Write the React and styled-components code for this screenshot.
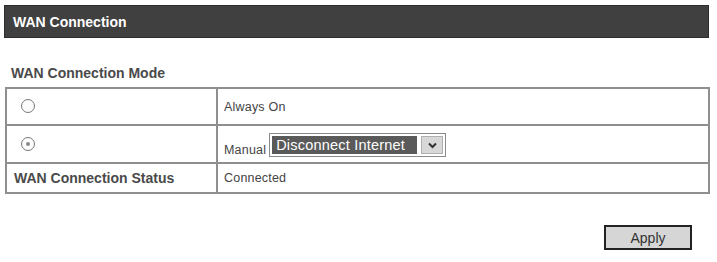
import styled, { createGlobalStyle } from "styled-components";

const GlobalStyle = createGlobalStyle`
  body {
    margin: 0;
    background: #fff;
    font-family: "Liberation Sans", Arial, sans-serif;
  }
`;

const Page = styled.div`
  width: 717px;
  height: 262px;
  padding: 5px 8px 0 4px;
  box-sizing: border-box;
`;

const TitleBar = styled.div`
  height: 33px;
  background: #404040;
  border: 1px solid #2c2c2c;
  box-sizing: border-box;
  display: flex;
  align-items: center;
  padding: 1px 0 0 8px;
  color: #fff;
  font-weight: bold;
  font-size: 14px;
`;

const SectionTitle = styled.div`
  margin: 27px 0 0 7px;
  height: 18px;
  color: #4a4a4a;
  font-weight: bold;
  font-size: 14px;
`;

const Table = styled.table`
  margin: 4px 0 0 1px;
  width: 705px;
  table-layout: fixed;
  border-collapse: collapse;
  border: 2px solid #8f8f8f;
  color: #444;
`;

const Col = styled.col`
  width: ${(p) => p.$w};
`;

const Cell = styled.td`
  border: 2px solid #8f8f8f;
  height: ${(p) => p.$h}px;
  padding: 0 0 0 ${(p) => (p.$first ? 7 : 6)}px;
  vertical-align: middle;
  font-weight: ${(p) => (p.$bold ? "bold" : "normal")};
  font-size: ${(p) => (p.$bold ? "14px" : "12.5px")};
  letter-spacing: ${(p) => (p.$bold ? "0" : "0.2px")};
  color: ${(p) => (p.$bold ? "#4a4a4a" : "#444")};
  box-sizing: border-box;
`;

const Radio = styled.span`
  display: inline-block;
  width: 12px;
  height: 12px;
  border-radius: 50%;
  border: 1px solid #777;
  background: #fbfbfb;
  margin: 2px 0 0 7px;
  position: relative;
  &::after {
    content: "";
    display: ${(p) => (p.$checked ? "block" : "none")};
    position: absolute;
    left: 4px;
    top: 4px;
    width: 4px;
    height: 4px;
    border-radius: 50%;
    background: #888;
  }
`;

const ManualRow = styled.div`
  display: flex;
  align-items: flex-end;
  gap: 3px;
  padding-top: 2px;
`;

const ManualLabel = styled.span`
  font-size: 12.5px;
  letter-spacing: 0.2px;
`;

const Select = styled.div`
  width: 177px;
  height: 24px;
  border: 1px solid #8a8a8a;
  box-sizing: border-box;
  display: flex;
  align-items: stretch;
  padding: 2px;
  background: #fff;
`;

const SelectValue = styled.div`
  flex: 1;
  background: #5a5a5a;
  color: #fff;
  font-size: 14.5px;
  line-height: 18px;
  padding-left: 4px;
`;

const SelectArrow = styled.div`
  width: 20px;
  margin-left: 4px;
  background: #d8d8d8;
  border: 1px solid #b0b0b0;
  display: flex;
  align-items: center;
  justify-content: center;
`;

const Footer = styled.div`
  display: flex;
  justify-content: flex-end;
  padding: 31px 17px 0 0;
`;

const ApplyButton = styled.button`
  width: 88px;
  height: 25px;
  background: #d6d6d6;
  border: 2px solid #222;
  font-family: "Liberation Sans", Arial, sans-serif;
  font-size: 14px;
  color: #333;
  padding: 0;
`;

export default function App() {
  return (
    <>
      <GlobalStyle />
      <Page>
        <TitleBar>WAN Connection</TitleBar>
        <SectionTitle>WAN Connection Mode</SectionTitle>
        <Table>
          <colgroup>
            <Col $w="211px" />
            <Col $w="auto" />
          </colgroup>
          <tbody>
            <tr>
              <Cell $first $h={37}>
                <Radio />
              </Cell>
              <Cell $h={37}>Always On</Cell>
            </tr>
            <tr>
              <Cell $first $h={38}>
                <Radio $checked />
              </Cell>
              <Cell $h={38}>
                <ManualRow>
                  <ManualLabel>Manual</ManualLabel>
                  <Select>
                    <SelectValue>Disconnect Internet</SelectValue>
                    <SelectArrow>
                      <svg width="9" height="7" viewBox="0 0 9 7">
                        <path d="M1 1.5 L4.5 5 L8 1.5" fill="none" stroke="#333" strokeWidth="2" />
                      </svg>
                    </SelectArrow>
                  </Select>
                </ManualRow>
              </Cell>
            </tr>
            <tr>
              <Cell $first $bold $h={30}>
                WAN Connection Status
              </Cell>
              <Cell $h={30}>Connected</Cell>
            </tr>
          </tbody>
        </Table>
        <Footer>
          <ApplyButton>Apply</ApplyButton>
        </Footer>
      </Page>
    </>
  );
}
